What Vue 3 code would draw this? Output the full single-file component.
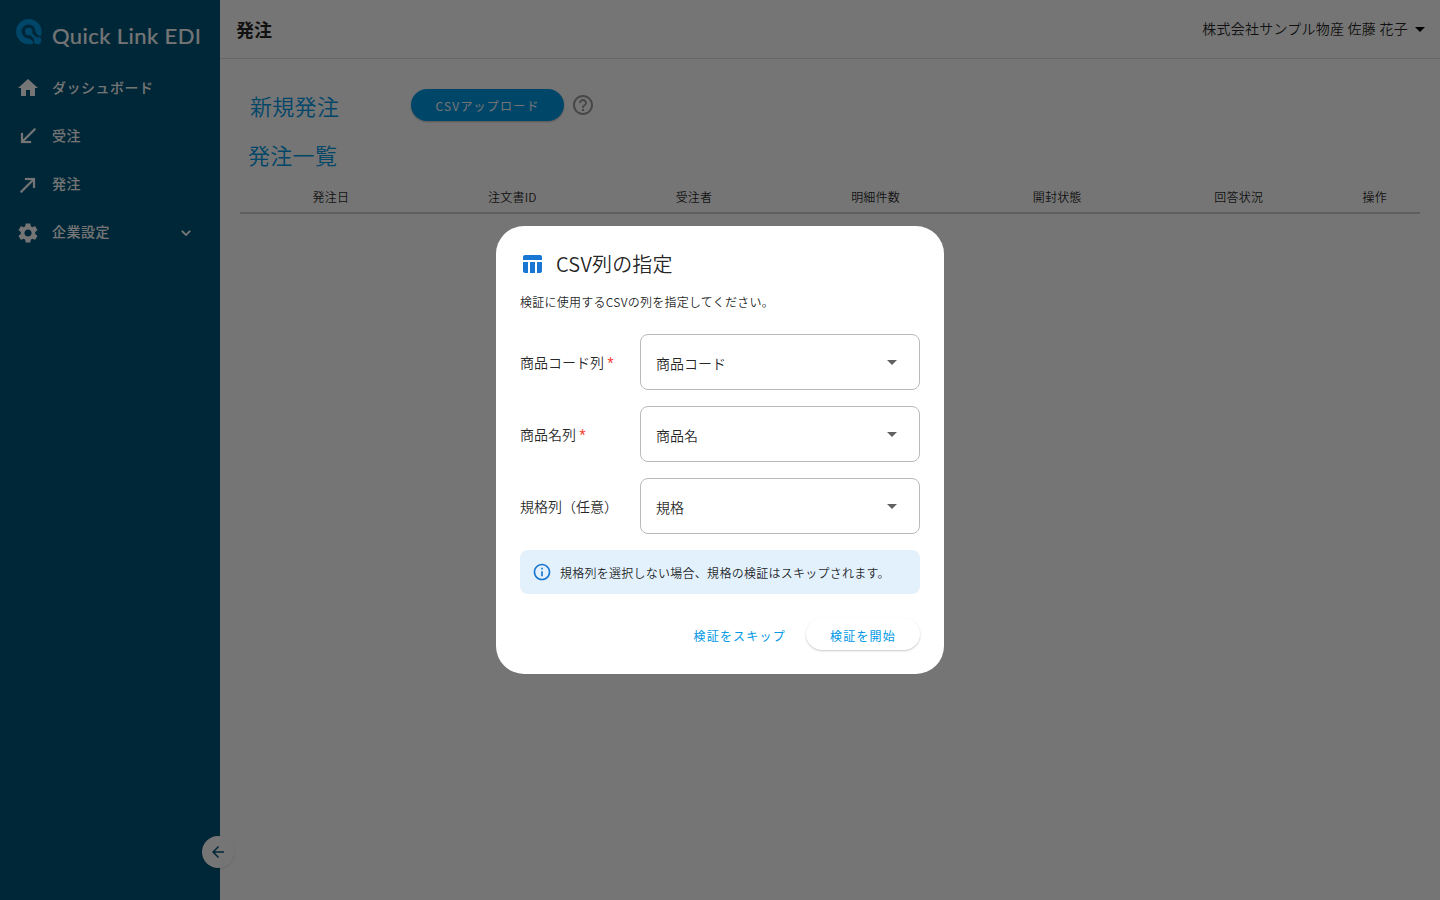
<script setup>
const nav = [
  { label: 'ダッシュボード', d: 'M10 20v-6h4v6h5v-8h3L12 3 2 12h3v8z' },
  { label: '受注', bold: true, d: 'M20 5.41 18.59 4 7 15.59V9H5v10h10v-2H8.41z' },
  { label: '発注', bold: true, d: 'M9 5v2h6.59L4 18.59 5.41 20 17 8.41V15h2V5z' },
  { label: '企業設定', more: true, d: 'M19.14 12.94c.04-.3.06-.61.06-.94 0-.32-.02-.64-.07-.94l2.03-1.58c.18-.14.23-.41.12-.61l-1.92-3.32c-.12-.22-.37-.29-.59-.22l-2.39.96c-.5-.38-1.03-.7-1.62-.94l-.36-2.54c-.04-.24-.24-.41-.48-.41h-3.84c-.24 0-.43.17-.47.41l-.36 2.54c-.59.24-1.13.57-1.62.94l-2.39-.96c-.22-.08-.47 0-.59.22L2.74 8.87c-.12.21-.08.47.12.61l2.03 1.58c-.05.3-.09.63-.09.94s.02.64.07.94l-2.03 1.58c-.18.14-.23.41-.12.61l1.92 3.32c.12.22.37.29.59.22l2.39-.96c.5.38 1.03.7 1.62.94l.36 2.54c.05.24.24.41.48.41h3.84c.24 0 .44-.17.47-.41l.36-2.54c.59-.24 1.13-.56 1.62-.94l2.39.96c.22.08.47 0 .59-.22l1.92-3.32c.12-.22.07-.47-.12-.61zM12 15.6c-1.98 0-3.6-1.62-3.6-3.6s1.62-3.6 3.6-3.6 3.6 1.62 3.6 3.6-1.62 3.6-3.6 3.6' },
]
const columns = ['発注日', '注文書ID', '受注者', '明細件数', '開封状態', '回答状況', '操作']
const fields = [
  { label: '商品コード列', required: true, value: '商品コード' },
  { label: '商品名列', required: true, value: '商品名' },
  { label: '規格列（任意）', required: false, value: '規格' },
]
</script>

<template>
  <div class="app">
    <aside class="side">
      <div class="brand">
        <svg class="mark" width="26" height="26" viewBox="0 0 26 26" fill="#0099e5">
          <path d="M24.500 17.200C25.200 16 25.500 14.300 25.500 12.900A12.700 12.700 0 1 0 12.800 25.300H15.500C17.500 25.300 17.600 22.600 16 21.500 14.500 20.300 13.500 19.600 11.500 19.200A6.900 6.900 0 1 1 19.300 11.500C19.600 14 21.500 16.500 24.500 17.200z" />
          <circle cx="12.700" cy="12.500" r="3.700" />
          <path d="M13.500 13.500 21 21" stroke="#0099e5" stroke-width="2.600" />
          <circle cx="21.700" cy="21.600" r="3.700" />
        </svg>
        <svg class="name" width="152" height="28" viewBox="0 0 152 28">
          <text x="0" y="22" textLength="149" lengthAdjust="spacing">Quick Link EDI</text>
        </svg>
      </div>
      <nav class="nav">
        <div v-for="n in nav" :key="n.label" class="item">
          <svg width="24" height="24" viewBox="0 0 24 24" :class="{ bold: n.bold }"><path :d="n.d" fill="#fff" /></svg>
          <span>{{ n.label }}</span>
          <svg v-if="n.more" class="chev" width="18" height="18" viewBox="0 0 24 24"><path fill="#fff" stroke="#fff" stroke-width=".8" d="M7.410 8.590 12 13.170l4.590-4.580L18 10l-6 6-6-6z" /></svg>
        </div>
      </nav>
      <div class="collapse">
        <svg width="18" height="18" viewBox="0 0 24 24"><path fill="#00557a" d="M20 11H7.830l5.590-5.590L12 4l-8 8 8 8 1.410-1.410L7.830 13H20z" /></svg>
      </div>
    </aside>
    <main class="main">
      <header class="top">
        <h1>発注</h1>
        <div class="user">
          <span>株式会社サンプル物産 佐藤 花子</span>
          <svg width="10" height="5" viewBox="0 0 10 5"><path d="M0 0h10L5 5z" /></svg>
        </div>
      </header>
      <div class="create">
        <h2>新規発注</h2>
        <button class="upload">CSVアップロード</button>
        <svg class="help" width="24" height="24" viewBox="0 0 24 24"><path fill="#9a9a9a" d="M11 18h2v-2h-2zm1-16C6.480 2 2 6.480 2 12s4.480 10 10 10 10-4.480 10-10S17.520 2 12 2m0 18c-4.410 0-8-3.590-8-8s3.590-8 8-8 8 3.590 8 8-3.590 8-8 8m0-14c-2.210 0-4 1.790-4 4h2c0-1.100.9-2 2-2s2 .9 2 2c0 2-3 1.750-3 5h2c0-2.250 3-2.500 3-5 0-2.210-1.790-4-4-4" /></svg>
      </div>
      <h2 class="list-title">発注一覧</h2>
      <div class="thead"><span v-for="c in columns" :key="c">{{ c }}</span></div>
    </main>
    <div class="scrim">
      <section class="dialog">
        <div class="title">
          <svg width="24" height="24" viewBox="0 0 24 24"><path fill="#1976d2" d="M10 10.020h5V21h-5zM17 21h3c1.100 0 2-.9 2-2v-9h-5zm3-18H5c-1.100 0-2 .9-2 2v3h19V5c0-1.100-.9-2-2-2M3 19c0 1.100.9 2 2 2h3V10H3z" /></svg>
          <span>CSV列の指定</span>
        </div>
        <p class="lead">検証に使用するCSVの列を指定してください。</p>
        <div v-for="f in fields" :key="f.label" class="field">
          <label>{{ f.label }}<span v-if="f.required" class="req">*</span></label>
          <div class="select">
            <span>{{ f.value }}</span>
            <svg width="10" height="5" viewBox="0 0 10 5"><path fill="#616161" d="M0 0h10L5 5z" /></svg>
          </div>
        </div>
        <div class="note">
          <svg width="20" height="20" viewBox="0 0 24 24"><path fill="#1976d2" d="M11 7h2v2h-2zm0 4h2v6h-2zm1-9C6.480 2 2 6.480 2 12s4.480 10 10 10 10-4.480 10-10S17.520 2 12 2m0 18c-4.410 0-8-3.590-8-8s3.590-8 8-8 8 3.590 8 8-3.590 8-8 8" /></svg>
          <span>規格列を選択しない場合、規格の検証はスキップされます。</span>
        </div>
        <div class="actions">
          <button class="skip">検証をスキップ</button>
          <button class="start">検証を開始</button>
        </div>
      </section>
    </div>
  </div>
</template>

<style>
body { margin: 0; overflow: hidden; }
</style>
<style scoped>
* { box-sizing: border-box; }
.app { position: relative; display: flex; width: 1440px; height: 900px; overflow: hidden; background: #fff; color: rgba(0,0,0,.87); font-family: "Noto Sans CJK JP", sans-serif; font-weight: 350; }
svg { display: block; flex: none; }
h1, h2, p { margin: 0; }
button { border: 0; padding: 0; font: inherit; background: #fff; }
.side { position: relative; width: 220px; height: 900px; background: #00557a; color: #fff; flex: none; }
.brand { display: flex; height: 64px; padding: 19px 0 0 16px; }
.name { margin: 3px 0 0 10px; overflow: visible; }
.name text { font-family: Lato, sans-serif; font-size: 22px; font-weight: 400; fill: #fff; stroke: #fff; stroke-width: .2px; }
.item { display: flex; align-items: center; height: 48.250px; padding-left: 16px; font-size: 14px; font-weight: 500; letter-spacing: .5px; }
.item span { margin-left: 12px; padding-bottom: 3px; }
.bold path { stroke: #fff; stroke-width: .2; }
.chev { margin-left: auto; margin-right: 25px; }
.collapse { position: absolute; left: 202px; top: 836px; width: 32px; height: 32px; border-radius: 50%; background: #fff; display: flex; align-items: center; justify-content: center; box-shadow: 0 1px 3px rgba(0,0,0,.12); }
.main { flex: 1; min-width: 0; }
.top { height: 59px; display: flex; justify-content: space-between; align-items: center; padding: 0 15px 0 16px; border-bottom: 1px solid #e0e0e0; }
.top h1 { font-size: 18px; font-weight: 700; line-height: 28px; }
.user { display: flex; align-items: center; gap: 7px; font-size: 14px; letter-spacing: .25px; }
.user span { padding-bottom: 2px; }
.create { display: flex; align-items: center; height: 32px; margin: 30px 0 0 30px; }
h2 { color: #0099e5; font-size: 22px; font-weight: 350; line-height: 32px; letter-spacing: .3px; }
.create h2 { width: 161px; }
.upload { width: 153px; height: 32px; border-radius: 16px; background: #0099e5; color: #fff; font-size: 12px; font-weight: 400; letter-spacing: 1.200px; padding-top: 1px; box-shadow: 0 1px 2px rgba(0,0,0,.25); }
.help { margin-left: 7.400px; }
.list-title { margin: 17px 0 0 28px; }
.thead { display: grid; grid-template-columns: repeat(6, 181.600px) 1fr; margin: 10px 20px 0; height: 34px; border-bottom: 2px solid #ccc; font-size: 12px; line-height: 34px; text-align: center; letter-spacing: .2px; }
.scrim { position: absolute; inset: 0; background: rgba(0,0,0,.54); display: flex; align-items: center; justify-content: center; }
.dialog { width: 448px; height: 448px; border-radius: 28px; background: #fff; padding: 24px; }
.title { display: flex; align-items: center; gap: 12px; height: 28px; font-size: 20px; letter-spacing: .2px; }
.title span { padding-bottom: 1px; }
.lead { margin-top: 14px; height: 20px; font-size: 12px; line-height: 19px; letter-spacing: .25px; }
.field { display: flex; align-items: center; height: 56px; margin-top: 16px; font-size: 14px; }
.lead + .field { margin-top: 22px; }
.field label { width: 120px; padding-bottom: 1px; line-height: 20px; }
.req { margin-left: 3.500px; color: #f44336; font-family: Roboto, "Noto Sans CJK JP", sans-serif; font-size: 14px; font-weight: 400; line-height: 1; }
.select { flex: 1; height: 56px; display: flex; align-items: center; justify-content: space-between; border: 1px solid #b9b9b9; border-radius: 8px; padding: 0 22px 0 15px; }
.select span { padding-top: 2px; }
.note { display: flex; align-items: center; gap: 8px; height: 44px; margin-top: 16px; padding: 0 12px; border-radius: 8px; background: #e3f1fd; font-size: 12px; letter-spacing: .26px; }
.actions { display: flex; justify-content: flex-end; margin-top: 24px; color: #0099e5; }
.actions button { height: 32px; border-radius: 16px; color: #0099e5; font-size: 12px; font-weight: 400; letter-spacing: 1.220px; padding-top: 2px; }
.skip { margin-right: 20px; }
.actions .start { width: 114px; box-shadow: 0 1px 2px rgba(0,0,0,.22); }
</style>
